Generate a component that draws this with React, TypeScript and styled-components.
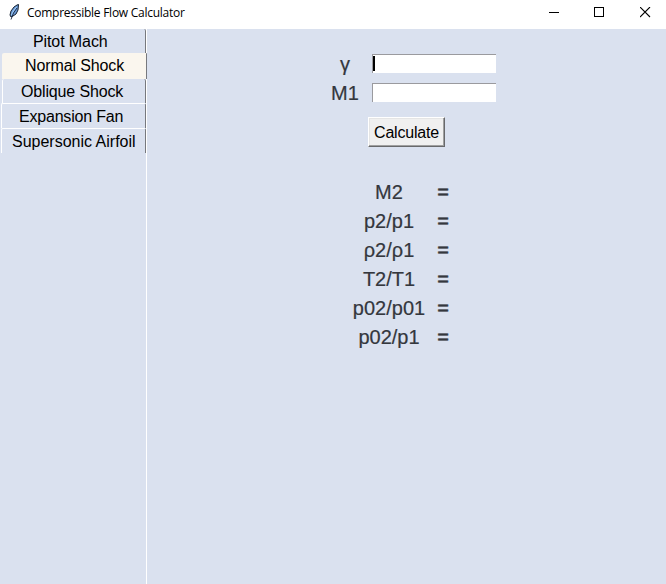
import React from 'react';
import styled, { createGlobalStyle } from 'styled-components';

const GlobalStyle = createGlobalStyle`
  * { box-sizing: border-box; }
  body { margin: 0; background: #dae1ef; overflow: hidden; }
`;

const Window = styled.div`
  width: 666px;
  height: 584px;
  display: flex;
  flex-direction: column;
  background: #dae1ef;
  color: #000;
  font-family: 'Liberation Sans', Arial, sans-serif;
`;

const TitleBar = styled.header`
  height: 29px;
  flex: none;
  display: flex;
  align-items: flex-start;
  background: #fff;
`;

const Feather = styled.svg`
  display: block;
  width: 11px;
  height: 16px;
  margin: 4px 0 0 9px;
`;

const Title = styled.h1`
  flex: 1;
  margin: 5px 0 0 7px;
  font: 400 12px/16px 'Open Sans', 'Noto Sans', sans-serif;
  letter-spacing: -0.26px;
  white-space: nowrap;
`;

const WindowControls = styled.div`
  display: grid;
  grid-template-columns: 45px 46px 11px;
  padding: 7px 15px 0 0;
`;

const WindowButton = styled.button`
  width: 11px;
  height: 11px;
  padding: 0;
  border: 0;
  background: none;
  svg { display: block; }
`;

const Body = styled.div`
  flex: 1;
  display: flex;
`;

const Sidebar = styled.nav`
  width: 147px;
  border-right: 1px solid #fff;
`;

const Tab = styled.button<{
  $height: number;
  $textStart: number;
  $spacing?: number;
  $selected?: boolean;
  $first?: boolean;
  $inset?: number;
}>`
  position: relative;
  display: flex;
  align-items: center;
  width: ${p => (p.$selected ? 145 : 146 - (p.$inset ?? 1))}px;
  height: ${p => p.$height}px;
  margin-left: ${p => p.$inset ?? 1}px;
  padding: ${p => (p.$selected ? 0 : 2)}px 0 0 ${p => p.$textStart}px;
  border: solid;
  border-width: ${p => (p.$first || p.$selected || p.$inset === 2 ? 0 : 1)}px 1px 0 ${p => (p.$first || p.$selected ? 0 : 1)}px;
  border-color: #fff #77797e #fff #fff;
  border-radius: ${p => (p.$selected ? '2px 1px 0 0' : '2px 2px 0 0')};
  background: ${p => (p.$selected ? '#faf6ee' : '#dae1ef')};
  color: #000;
  font: 16px/18px 'Liberation Sans', Arial, sans-serif;
  letter-spacing: ${p => p.$spacing ?? 0}px;
  white-space: nowrap;
`;

const Panel = styled.main`
  flex: 1;
  padding-top: 25px;
  color: #34373d;
  font-size: 20px;
  line-height: 24px;
`;

const Form = styled.form`
  display: grid;
  grid-template-columns: 28px 124px;
  grid-auto-rows: 19px;
  column-gap: 13px;
  row-gap: 10px;
  margin-left: 184px;
`;

const FieldLabel = styled.label`
  height: 19px;
  line-height: 20px;
  text-align: center;
  -webkit-text-stroke: 0.2px #34373d;
`;

const Field = styled.div`
  display: flex;
  background: #fff;
  border: solid #9a9a9e;
  border-width: 1px 0 0 1px;
`;

const Caret = styled.span`
  width: 2px;
  height: 15px;
  margin-top: 1px;
  background: #000;
`;

const Calculate = styled.button`
  display: block;
  width: 77px;
  height: 30px;
  margin: 15px 0 0 221px;
  padding: 1px 0 0;
  border: 1px solid;
  border-color: #fff #68696b #68696b #fff;
  background: #f0f0f0;
  box-shadow: inset -1px -1px #a0a0a0, inset 1px 1px #e5e5e5;
  color: #000;
  font: 16px/18px 'Liberation Sans', Arial, sans-serif;
  letter-spacing: -0.2px;
`;

const Results = styled.dl`
  display: grid;
  grid-template-columns: 74px 12px;
  grid-auto-rows: 29px;
  column-gap: 11px;
  margin: 31px 0 0 205px;
  line-height: 29px;
  text-align: center;
`;

const Quantity = styled.dt`
  white-space: nowrap;
  -webkit-text-stroke: 0.2px #34373d;
`;

const Value = styled.dd`
  margin: 0;
  -webkit-text-stroke: 0.5px #34373d;
`;

const quantities = ['M2', 'p2/p1', 'ρ2/ρ1', 'T2/T1', 'p02/p01', 'p02/p1'];

export default function App() {
  return (
    <>
      <GlobalStyle />
      <Window>
        <TitleBar>
          <Feather viewBox="0 0 11 16">
            <path d="M9.5.5 8 1 5 3 2 7 1 11l1 2 2-1 3-2 2-4Z" fill="#6b9bd8" stroke="#15202f" strokeWidth="1" />
            <path d="M7.5 3 4.5 7 2.5 11" fill="none" stroke="#9cc9f5" strokeWidth="1.1" />
            <path d="M8 4 4.5 9 2 15.5" fill="none" stroke="#17253f" strokeWidth=".9" />
          </Feather>
          <Title>Compressible Flow Calculator</Title>
          <WindowControls>
            <WindowButton aria-label="Minimize">
              <svg width="11" height="11" shapeRendering="crispEdges"><path d="M0 5.5h10" stroke="#000" /></svg>
            </WindowButton>
            <WindowButton aria-label="Maximize">
              <svg width="11" height="11" shapeRendering="crispEdges"><path d="M.5.5h9v9h-9z" fill="none" stroke="#000" /></svg>
            </WindowButton>
            <WindowButton aria-label="Close">
              <svg width="11" height="11"><path d="m0 0 10 10M10 0 0 10" stroke="#000" strokeWidth="1.1" /></svg>
            </WindowButton>
          </WindowControls>
        </TitleBar>
        <Body>
          <Sidebar>
            <Tab $height={24} $textStart={33} $spacing={-0.1} $first $inset={0}>Pitot Mach</Tab>
            <Tab $height={26} $textStart={23} $spacing={-0.12} $selected $inset={2}>Normal Shock</Tab>
            <Tab $height={24} $textStart={18} $spacing={-0.15} $inset={2}>Oblique Shock</Tab>
            <Tab $height={25} $textStart={17} $spacing={-0.2}>Expansion Fan</Tab>
            <Tab $height={25} $textStart={10}>Supersonic Airfoil</Tab>
          </Sidebar>
          <Panel>
            <Form>
              <FieldLabel>γ</FieldLabel>
              <Field><Caret /></Field>
              <FieldLabel>M1</FieldLabel>
              <Field />
            </Form>
            <Calculate type="button">Calculate</Calculate>
            <Results>
              {quantities.map(name => (
                <React.Fragment key={name}>
                  <Quantity>{name}</Quantity>
                  <Value>=</Value>
                </React.Fragment>
              ))}
            </Results>
          </Panel>
        </Body>
      </Window>
    </>
  );
}
